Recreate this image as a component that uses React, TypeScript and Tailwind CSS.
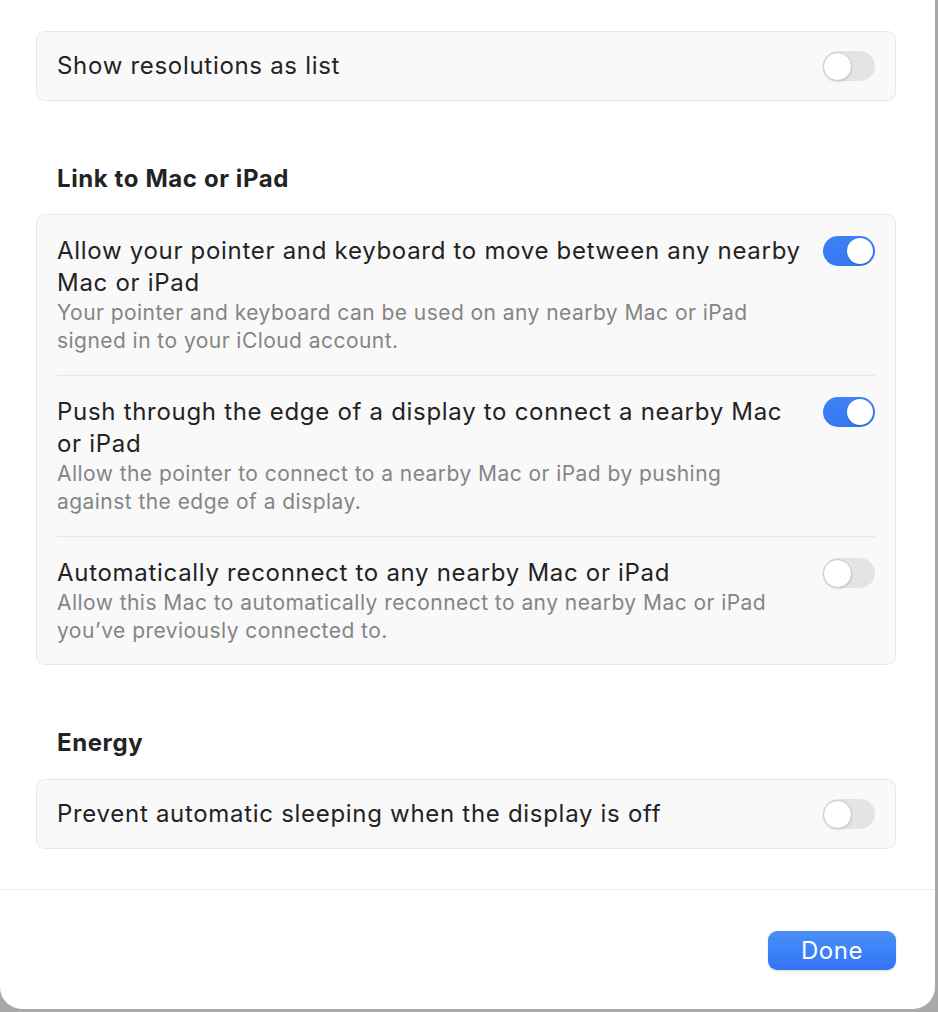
import React from 'react';

function Toggle({ on }: { on: boolean }) {
  if (on) {
    return (
      <div className="w-[52px] h-[30px] shrink-0 rounded-full bg-gradient-to-b from-[#3f82f6] to-[#3577f1] p-[2px] flex justify-end">
        <div className="w-[26px] h-[26px] rounded-full bg-white shadow-[0_1px_2px_rgba(0,0,0,0.2)]" />
      </div>
    );
  }
  return (
    <div className="w-[52px] h-[30px] shrink-0 rounded-full bg-[#e4e4e4] flex items-center">
      <div className="w-[29px] h-[29px] rounded-full bg-white border border-[#c9c9c9] shadow-[0_1px_2px_rgba(0,0,0,0.12)]" />
    </div>
  );
}

function SimpleRow({ title, on }: { title: string; on: boolean }) {
  return (
    <div className="h-[68px] px-5 flex items-center justify-between">
      <span className="text-[24px] leading-[32px] tracking-[0.7px] text-[#232323]">{title}</span>
      <Toggle on={on} />
    </div>
  );
}

function DetailRow({ title, desc, on, last }: { title: string[]; desc: string[]; on: boolean; last?: boolean }) {
  return (
    <div className="px-5">
      <div className={`flex items-start justify-between pt-[20px] ${last ? 'pb-[19px]' : 'pb-[20px] border-b border-[#e6e6e6]'}`}>
        <div className="w-[750px]">
          <p className="text-[24px] leading-[32px] tracking-[0.7px] text-[#232323]">
            {title.map((t, i) => (
              <span key={i} className="block whitespace-nowrap">{t}</span>
            ))}
          </p>
          <p className="text-[21px] leading-[28px] tracking-[0.45px] text-[#858585]">
            {desc.map((t, i) => (
              <span key={i} className="block whitespace-nowrap">{t}</span>
            ))}
          </p>
        </div>
        <div className="pt-[1px]">
          <Toggle on={on} />
        </div>
      </div>
    </div>
  );
}

export default function App() {
  return (
    <div className="w-[938px] h-[1012px] bg-[#a9a9a9] overflow-hidden" style={{ fontFamily: 'Inter, "Noto Sans", sans-serif' }}>
      <div className="w-[935px] h-[1009px] bg-white rounded-b-[22px] flex flex-col">
        <div className="pl-[36px] pr-[39px] pt-[31px]">
          <div className="rounded-[9px] border border-[#e8e8e8] bg-[#f9f9f9]">
            <SimpleRow title="Show resolutions as list" on={false} />
          </div>

          <h2 className="mt-[62px] mb-[19px] px-[21px] text-[24px] leading-[32px] font-bold tracking-[0.6px] text-[#232323]">Link to Mac or iPad</h2>
          <div className="rounded-[9px] border border-[#e8e8e8] bg-[#f9f9f9]">
            <DetailRow
              title={['Allow your pointer and keyboard to move between any nearby', 'Mac or iPad']}
              desc={['Your pointer and keyboard can be used on any nearby Mac or iPad', 'signed in to your iCloud account.']}
              on
            />
            <DetailRow
              title={['Push through the edge of a display to connect a nearby Mac', 'or iPad']}
              desc={['Allow the pointer to connect to a nearby Mac or iPad by pushing', 'against the edge of a display.']}
              on
            />
            <DetailRow
              title={['Automatically reconnect to any nearby Mac or iPad']}
              desc={['Allow this Mac to automatically reconnect to any nearby Mac or iPad', 'you’ve previously connected to.']}
              on={false}
              last
            />
          </div>

          <h2 className="mt-[62px] mb-[20px] px-[21px] text-[24px] leading-[32px] font-bold tracking-[0.6px] text-[#232323]">Energy</h2>
          <div className="rounded-[9px] border border-[#e8e8e8] bg-[#f9f9f9]">
            <SimpleRow title="Prevent automatic sleeping when the display is off" on={false} />
          </div>
        </div>

        <div className="mt-[40px] border-t border-[#ececec] flex justify-end pr-[39px] pt-[41px]">
          <button className="w-[128px] h-[39px] rounded-[9px] bg-gradient-to-b from-[#4b8ff7] to-[#3174f5] text-white text-[24px] leading-none tracking-[0.5px] shadow-[0_1px_2px_rgba(0,0,0,0.15)]">
            Done
          </button>
        </div>
      </div>
    </div>
  );
}
